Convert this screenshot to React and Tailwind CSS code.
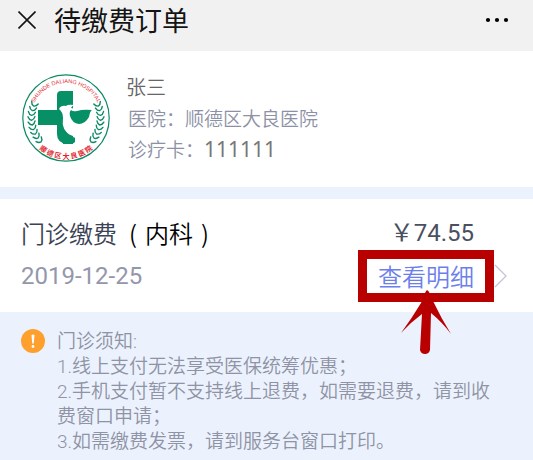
import React from "react";

const notices = [
  "1.线上支付无法享受医保统筹优惠；",
  "2.手机支付暂不支持线上退费，如需要退费，请到收费窗口申请；",
  "3.如需缴费发票，请到服务台窗口打印。",
];

// angles of the laurel leaves on the right side, mirrored for the left
const leaves = [-22, -14, -6, 2, 10, 18, 26, 34, 42];

function Laurel() {
  return (
    <g fill="none" stroke="#0b8a63" strokeWidth="1.4" strokeLinecap="round">
      {leaves.map((a) => (
        <path key={a} transform={`rotate(${a} 44 44)`} d="M75 41.5 Q76 44.5 78.5 45 Q81 44.5 82 41.5" />
      ))}
    </g>
  );
}

function HospitalLogo() {
  return (
    <svg viewBox="0 0 88 88" className="size-22 shrink-0" role="img" aria-label="顺德区大良医院">
      <defs>
        <path id="arcTop" d="M9 44 A35 35 0 0 1 79 44" />
        <path id="arcBottom" d="M3 44 A41 41 0 0 0 85 44" />
      </defs>
      <circle cx="44" cy="44" r="43.2" fill="#fff" stroke="#0b8a63" strokeWidth="1.2" />
      <Laurel />
      <g transform="matrix(-1 0 0 1 88 0)">
        <Laurel />
      </g>
      <path
        fill="#079066"
        d="M39 17 H51 V36 H53 V68 Q51 70 45 70 Q35 69 35 60 V51 H16 V36 H35 V21 Q35 17 39 17Z"
      />
      <path
        fill="#fff"
        d="M37 35 Q39 31 44 32 Q46 30 52 31 Q50 32 49 34 L54 35 V64 Q47 63 42 55 Q40 50 41 44 Q41 38 37 35Z"
      />
      <path fill="#079066" d="M49 36 Q51 38 55 37 Q61 35 70 36 Q68 37 67 43 Q63 50 57 50 Q50 49 48 42 Q47 38 49 36Z" />
      <path fill="#079066" d="M41 53 Q44 60 51 62 V70 H41Z" />
      <text fill="#e0262d" fontSize="5.6" className="font-['Liberation_Sans',sans-serif]" textAnchor="middle">
        <textPath href="#arcTop" startOffset="50%">SHUNDE DALIANG HOSPITAL</textPath>
      </text>
      <text fill="#e0262d" fontSize="7" fontWeight="700" textAnchor="middle">
        <textPath href="#arcBottom" startOffset="50%">顺 德 区 大 良 医 院</textPath>
      </text>
    </svg>
  );
}

function Header() {
  return (
    <header className="flex h-[51px] items-center bg-[#f1f1f1] pr-6 pb-3 pl-[18px] text-[#141414]">
      <button aria-label="关闭">
        <svg viewBox="0 0 18 18" className="size-[18px]" stroke="currentColor" strokeWidth="1.6">
          <path d="M0.5 0.5 L17.5 17.5 M17.5 0.5 L0.5 17.5" />
        </svg>
      </button>
      <h1 className="ml-[18px] text-[27px] leading-9">待缴费订单</h1>
      <button aria-label="更多" className="ml-auto">
        <svg viewBox="0 0 24 6" className="h-[6px] w-6" fill="#000">
          <circle cx="3" cy="3" r="2.1" />
          <circle cx="12" cy="3" r="2.1" />
          <circle cx="21" cy="3" r="2.1" />
        </svg>
      </button>
    </header>
  );
}

function Patient() {
  return (
    <section className="flex items-center bg-white px-[22px] pt-5 pb-[22px]">
      <HospitalLogo />
      <div className="ml-4 text-[19px] leading-[31px] font-[350] text-[#8d91a6]">
        <p className="text-[20px] text-[#666]">张三</p>
        <p className="pl-0.5">医院：顺德区大良医院</p>
        <p className="pl-0.5">
          诊疗卡：
          <span className="font-['Noto_Sans',sans-serif] text-[21px] font-normal text-[#777]">111111</span>
        </p>
      </div>
    </section>
  );
}

// red frame and arrow that point at the detail button
function Pointer() {
  return (
    <>
      <span className="pointer-events-none absolute -inset-x-5 -top-2 -bottom-2 border-9 border-[#b90000]" />
      <svg
        viewBox="0 0 50 65"
        className="pointer-events-none absolute top-8 left-[23px] h-[65px] w-[50px]"
        fill="#b90000"
      >
        <path d="M26 0 Q28 1 29 4 L33 13 Q40 28 50 44 Q41 32 30 23 L29 60 Q28 64 24 64 Q20 64 19 60 L21 24 Q10 32 0 43 Q11 28 20 13 L24 3 Q25 1 26 0Z" />
      </svg>
    </>
  );
}

function Order() {
  return (
    <section className="mt-3 bg-white pt-4 pr-[26px] pb-[18px] pl-[21px] text-[24px] leading-9">
      <div className="flex justify-between pr-[33px]">
        <h2 className="flex font-[350] text-[#3b4254]">
          门诊缴费
          <span className="ml-3 flex gap-2 text-black">
            <span>(</span>内科<span>)</span>
          </span>
        </h2>
        <p className="font-['Roboto','Noto_Sans_CJK_SC',sans-serif] text-[#4a5060]">￥74.55</p>
      </div>
      <div className="mt-[7px] flex items-center">
        <time className="font-['Roboto',sans-serif] text-[#9497ab]">2019-12-25</time>
        <button className="relative ml-auto font-[350] text-[#6c80ec]">
          查看明细
          <Pointer />
        </button>
        <svg viewBox="0 0 16 24" className="ml-[17px] h-6 w-4" fill="none" stroke="#c3c7d3" strokeWidth="1.3">
          <path d="M4 1 L15 12 L4 23" />
        </svg>
      </div>
    </section>
  );
}

function Notice() {
  return (
    <section className="flex pt-[17px] pr-7 pb-2 pl-[21px] font-['Roboto','Noto_Sans_CJK_SC',sans-serif] text-[19px] leading-[25px] font-[350] text-[#8f93a3]">
      <svg viewBox="0 0 24 24" className="size-6 shrink-0">
        <circle cx="12" cy="12" r="12" fill="#ff9f2e" />
        <path d="M10.5 6 Q12 5 13.5 6 L12.8 14.5 H11.2Z" fill="#fff" />
        <circle cx="12" cy="17.5" r="1.4" fill="#fff" />
      </svg>
      <div className="ml-3">
        <h3>门诊须知:</h3>
        {notices.map((text) => (
          <p key={text}>{text}</p>
        ))}
      </div>
    </section>
  );
}

export default function App() {
  return (
    <main className="min-h-screen bg-[#ebf2fe] font-['Noto_Sans_CJK_SC',sans-serif]">
      <Header />
      <Patient />
      <Order />
      <Notice />
    </main>
  );
}
